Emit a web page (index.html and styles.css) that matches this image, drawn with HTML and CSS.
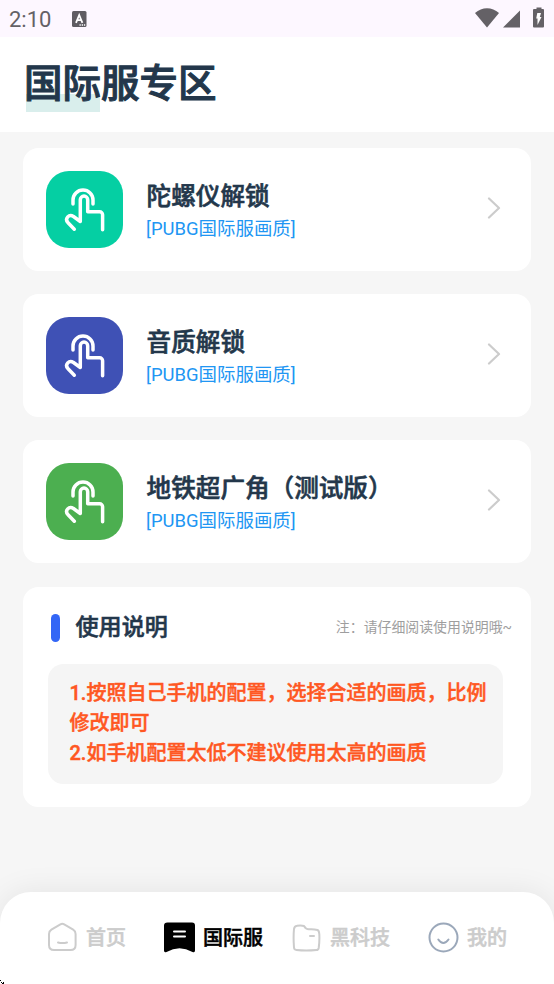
FILE: index.html
```html
<!DOCTYPE html>
<html lang="zh-CN">
<head>
<meta charset="utf-8">
<title>国际服专区</title>
<link rel="stylesheet" href="styles.css">
</head>
<body>
<svg width="0" height="0" class="defs">
  <symbol id="tap" viewBox="0 0 77 77">
    <path d="M27 33V29a10 10 0 0 1 20 0V33" />
    <path d="M28.300 58.200L21.800 51.500C18.500 47.500 23 42.500 27.500 45.500L34.300 50.500V28.800a3.700 3.700 0 0 1 7.400 0V40.800H53.600a3 3 0 0 1 3 3V58.800" />
  </symbol>
</svg>
<div class="status">
  <span class="time">2:10</span>
  <svg class="lang" width="15" height="16" viewBox="0 0 15 16"><rect width="14.500" height="16" rx="1.500" fill="#5f5c62"/><path d="M4 11.800L7.200 4L10.400 11.800M5.200 9.200h4" fill="none" stroke="#fff" stroke-width="1.800"/><path d="M7.500 14h6" stroke="#fff" stroke-width="1.300" stroke-dasharray="1.300 .900"/></svg>
  <svg class="signals" width="70" height="22" viewBox="0 0 70 22"><g fill="#646166"><path d="M0 6C7-.300 17-.300 24 6L12 20.500Z"/><path d="M28 20.500L45 3.500V20.500Z"/><path d="M59 2h2.500V.500h5V2H68q1 0 1 1v16.500q0 1-1 1h-9q-1 0-1-1V3q0-1 1-1z"/></g><path d="M62.300 6h3.700l-1.200 4H66.500l-4 8v-6.500H61.200z" fill="#fff"/></svg>
</div>
<header class="header"><h1>国际服专区</h1></header>
<main>
  <section class="card">
    <div class="tile teal"><svg width="77" height="77"><use href="#tap"/></svg></div>
    <div class="copy"><h2>陀螺仪解锁</h2><p>[PUBG国际服画质]</p></div>
    <svg class="arrow" width="14" height="22" viewBox="0 0 14 22"><path d="M2 1.500L12 11L2 20.500"/></svg>
  </section>
  <section class="card">
    <div class="tile indigo"><svg width="77" height="77"><use href="#tap"/></svg></div>
    <div class="copy"><h2>音质解锁</h2><p>[PUBG国际服画质]</p></div>
    <svg class="arrow" width="14" height="22" viewBox="0 0 14 22"><path d="M2 1.500L12 11L2 20.500"/></svg>
  </section>
  <section class="card">
    <div class="tile green"><svg width="77" height="77"><use href="#tap"/></svg></div>
    <div class="copy"><h2>地铁超广角（测试版）</h2><p>[PUBG国际服画质]</p></div>
    <svg class="arrow" width="14" height="22" viewBox="0 0 14 22"><path d="M2 1.500L12 11L2 20.500"/></svg>
  </section>
  <section class="guide">
    <div class="guide-head"><i class="bar"></i><h3>使用说明</h3><span class="note">注：请仔细阅读使用说明哦~</span></div>
    <div class="steps"><p>1.按照自己手机的配置，选择合适的画质，比例修改即可</p><p>2.如手机配置太低不建议使用太高的画质</p></div>
  </section>
</main>
<nav class="nav">
  <a class="item home"><svg width="31" height="31" viewBox="0 0 31 31"><path d="M13.400 2.300Q15.300 1.200 17.200 2.300L26.200 7.700Q28.600 9.200 28.600 12V23Q28.600 28.100 23.500 28.100H7Q2 28.100 2 23V12Q2 9.200 4.400 7.700ZM11 20.500q4.500 1.200 9 0"/></svg><span>首页</span></a>
  <a class="item active"><svg width="31" height="31" viewBox="0 0 31 31"><path class="solid" d="M3.500.500H28Q31 .500 31 3.500V28.500Q31 31 28.500 30Q22 26.300 15.500 26.300T2.500 30Q0 31 0 28.500V3.500Q0 .500 3.500.500Z"/><path class="lines" d="M10 9.500H21M10 14.500H21"/></svg><span>国际服</span></a>
  <a class="item tech"><svg width="29" height="29" viewBox="0 0 29 29"><path d="M5 2.800Q9 2 12 3Q14 6.500 17 6.300Q22 6 25.500 7Q27 7.500 27.300 11Q27.700 18 26.700 25Q26.300 27 24.500 27Q14 28 4.500 27Q2.200 26.800 2 24.500Q1.200 14 2 6Q2.400 3.200 5 2.800ZM18 13H22"/></svg><span>黑科技</span></a>
  <a class="item mine"><svg width="31" height="31" viewBox="0 0 31 31"><circle cx="15.500" cy="15.500" r="14"/><path d="M10.300 17.500Q15.300 24.500 20.500 17.500"/></svg><span>我的</span></a>
</nav>
<svg class="corner" width="4" height="4" viewBox="0 0 4 4"><path d="M0 0h1v1H0zM1 2h1v1H1zM2 3h2v1H2zM3 2h1v1H3z"/></svg>
</body>
</html>
```

FILE: styles.css
```css
* { box-sizing: border-box; }
body {
  margin: 0;
  width: 554px;
  height: 984px;
  overflow: hidden;
  display: flex;
  flex-direction: column;
  background: #f6f6f6;
  color: #23374b;
  font-family: Roboto, "Noto Sans CJK SC", sans-serif;
}
h1, h2, h3, p { margin: 0; }
svg { flex: none; display: block; }
.defs { position: absolute; }
.status {
  height: 37px;
  flex: none;
  display: flex;
  align-items: center;
  padding: 0 9.500px 0 9px;
  background: #fdf7ff;
  color: #646166;
}
.time { width: 63px; font-size: 22px; line-height: 37px; padding-top: 2px; }
.signals { margin-left: auto; margin-top: -1px; }
.header { height: 95px; flex: none; background: #fff; padding: 18px 24px 0; }
h1 {
  width: max-content;
  font-size: 38.500px;
  line-height: 58px;
  font-weight: 500;
  -webkit-text-stroke: 1px;
  background: linear-gradient(#d9eeec, #d9eeec) 2px 39px / 74px 18px no-repeat;
}
main { flex: 1; display: flex; flex-direction: column; gap: 23px; padding: 16.400px 23px 0; }
.card {
  height: 123px;
  flex: none;
  display: flex;
  align-items: center;
  padding: 0 30px 0 23px;
  background: #fff;
  border-radius: 15.500px;
}
.tile { width: 77px; height: 77px; border-radius: 23px; flex: none; }
.tile svg { fill: none; stroke: #fff; stroke-width: 3.500; stroke-linecap: round; stroke-linejoin: round; }
.teal { background: #05cfa3; }
.indigo { background: #3f51b5; }
.green { background: #4caf50; }
.copy { flex: 1; margin-left: 23.600px; padding-top: 2px; }
h2 { font-size: 24.600px; line-height: 36px; font-weight: 500; white-space: nowrap; -webkit-text-stroke: .600px; }
.copy p { font-size: 18.460px; line-height: 28px; margin-left: -.500px; color: #2196f3; }
.arrow { margin-top: -3px; fill: none; stroke: #ccc; stroke-width: 2.200; stroke-linecap: round; stroke-linejoin: round; }
.guide { height: 220px; margin-top: .400px; flex: none; background: #fff; border-radius: 15.500px; padding: 23.500px 19px 0 25px; }
.guide-head { display: flex; align-items: center; height: 35px; padding-left: 3px; }
.bar { width: 9px; height: 28px; border-radius: 5px; background: #3366f6; margin-right: 15.500px; }
h3 { font-size: 23.100px; line-height: 34px; font-weight: 500; -webkit-text-stroke: .550px; }
.note { margin: -3px 0 0 auto; font-size: 13.900px; color: #9e9e9e; }
.steps {
  height: 120px;
  margin: 18.500px 9px 0 0;
  padding: 14px 9px 0 21.500px;
  border-radius: 15.500px;
  background: #f5f5f5;
  color: #ff5722;
  font-size: 20px;
  line-height: 30px;
  font-weight: 500;
  -webkit-text-stroke: .450px;
}
.nav {
  height: 92px;
  flex: none;
  display: flex;
  align-items: flex-start;
  padding: 30px 47px 0;
  background: #fff;
  border-radius: 31px 31px 0 0;
  box-shadow: 0 0 31px rgba(0, 0, 0, .08);
  color: #ccc;
}
.item { display: flex; align-items: center; gap: 8px; height: 31px; font-size: 20px; line-height: 30px; font-weight: 500; white-space: nowrap; -webkit-text-stroke: .500px; }
.item svg { fill: none; stroke: #ccc; stroke-width: 2; stroke-linecap: round; stroke-linejoin: round; }
.active { color: #000; margin-left: 38px; }
.active .solid { fill: #000; stroke: none; }
.active .lines { stroke: #fff; }
.tech { margin-left: 29px; gap: 9px; }
.mine { margin-left: 38px; }
.mine svg { stroke: #9ba8ba; }
.corner { position: absolute; left: 0; bottom: 0; }
```
